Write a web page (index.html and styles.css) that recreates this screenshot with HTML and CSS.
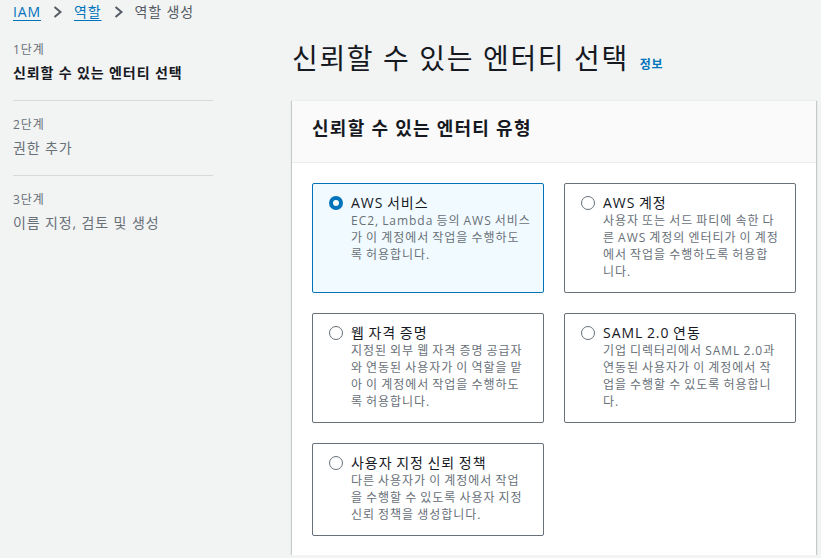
FILE: index.html
```html
<!DOCTYPE html>
<html lang="ko">

<head>
    <meta charset="UTF-8" />
    <meta name="viewport" content="width=device-width, initial-scale=1.0" />
    <link rel="stylesheet" href="styles.css">
    <title>역할 생성 - IAM</title>
</head>

<body>
    <nav class="breadcrumb">
        <a href="#" class="crumb-link">IAM</a>
        <svg class="chevron" width="9" height="12" viewBox="0 0 9 12"><polyline points="1.5,1 7.5,6 1.5,11" /></svg>
        <a href="#" class="crumb-link">역할</a>
        <svg class="chevron" width="9" height="12" viewBox="0 0 9 12"><polyline points="1.5,1 7.5,6 1.5,11" /></svg>
        <span class="crumb-current">역할 생성</span>
    </nav>
    <div class="layout">
        <ul class="steps">
            <li class="step">
                <div class="step-label">1단계</div>
                <div class="step-title active">신뢰할 수 있는 엔터티 선택</div>
            </li>
            <li class="step">
                <div class="step-label">2단계</div>
                <div class="step-title">권한 추가</div>
            </li>
            <li class="step">
                <div class="step-label">3단계</div>
                <div class="step-title">이름 지정, 검토 및 생성</div>
            </li>
        </ul>
        <main class="content">
            <h1 class="page-title">신뢰할 수 있는 엔터티 선택 <a href="#" class="info-link">정보</a></h1>
            <section class="panel">
                <div class="panel-header">
                    <h2>신뢰할 수 있는 엔터티 유형</h2>
                </div>
                <div class="panel-body">
                    <div class="tile selected">
                        <span class="radio checked"></span>
                        <div class="tile-text">
                            <div class="tile-title">AWS 서비스</div>
                            <div class="tile-desc">EC2, Lambda 등의 AWS 서비스<br>가 이 계정에서 작업을 수행하도<br>록 허용합니다.</div>
                        </div>
                    </div>
                    <div class="tile">
                        <span class="radio"></span>
                        <div class="tile-text">
                            <div class="tile-title">AWS 계정</div>
                            <div class="tile-desc">사용자 또는 서드 파티에 속한 다<br>른 AWS 계정의 엔터티가 이 계정<br>에서 작업을 수행하도록 허용합<br>니다.</div>
                        </div>
                    </div>
                    <div class="tile">
                        <span class="radio"></span>
                        <div class="tile-text">
                            <div class="tile-title">웹 자격 증명</div>
                            <div class="tile-desc">지정된 외부 웹 자격 증명 공급자<br>와 연동된 사용자가 이 역할을 맡<br>아 이 계정에서 작업을 수행하도<br>록 허용합니다.</div>
                        </div>
                    </div>
                    <div class="tile">
                        <span class="radio"></span>
                        <div class="tile-text">
                            <div class="tile-title">SAML 2.0 연동</div>
                            <div class="tile-desc">기업 디렉터리에서 SAML 2.0과<br>연동된 사용자가 이 계정에서 작<br>업을 수행할 수 있도록 허용합니<br>다.</div>
                        </div>
                    </div>
                    <div class="tile">
                        <span class="radio"></span>
                        <div class="tile-text">
                            <div class="tile-title">사용자 지정 신뢰 정책</div>
                            <div class="tile-desc">다른 사용자가 이 계정에서 작업<br>을 수행할 수 있도록 사용자 지정<br>신뢰 정책을 생성합니다.</div>
                        </div>
                    </div>
                </div>
            </section>
        </main>
    </div>
</body>

</html>
```

FILE: styles.css
```css
* {
    margin: 0;
    padding: 0;
    box-sizing: border-box;
}

body {
    background-color: #f2f3f3;
    font-family: "Open Sans", "Noto Sans CJK KR", sans-serif;
    color: #16191f;
    padding-left: 13px;
    overflow: hidden;
    letter-spacing: 0.055em;
}

.breadcrumb {
    display: flex;
    align-items: center;
    gap: 12px;
    font-size: 14px;
    line-height: 20px;
    padding-top: 2px;
}

.crumb-link {
    color: #0073bb;
    text-decoration: underline;
    text-underline-offset: 3px;
}

.crumb-current {
    color: #545b64;
}

.chevron polyline {
    fill: none;
    stroke: #545b64;
    stroke-width: 2;
}

.layout {
    display: flex;
}

.steps {
    list-style: none;
    width: 200px;
    margin-right: 79px;
    padding-top: 19px;
}

.step {
    padding: 15px 0 16px;
    border-top: 1px solid #d5dbdb;
}

.step:first-child {
    border-top: none;
    padding-top: 0;
}

.step-label {
    font-size: 12px;
    line-height: 17px;
    color: #687078;
}

.step-title {
    margin-top: 4px;
    font-size: 14px;
    line-height: 22px;
    color: #687078;
}

.step-title.active {
    color: #16191f;
    font-weight: 700;
}

.page-title {
    margin-top: 18px;
    font-size: 28px;
    line-height: 36px;
    font-weight: 400;
    letter-spacing: 0.058em;
    color: #16191f;
}

.info-link {
    margin-left: 2px;
    font-size: 12px;
    line-height: 1;
    font-weight: 700;
    letter-spacing: 0.06em;
    color: #0073bb;
    text-decoration: none;
}

.panel {
    width: 524px;
    margin-top: 24px;
    background-color: #fff;
    box-shadow: 0 1px 1px 0 rgba(0, 28, 36, .3), 1px 1px 1px 0 rgba(0, 28, 36, .15), -1px 1px 1px 0 rgba(0, 28, 36, .15);
    border-top: 1px solid #eaeded;
}

.panel-header {
    background-color: #fafafa;
    border-bottom: 1px solid #eaeded;
    padding: 14px 20px 21px;
}

.panel-header h2 {
    font-size: 18px;
    line-height: 26px;
    font-weight: 700;
    letter-spacing: 0.07em;
}

.panel-body {
    display: grid;
    grid-template-columns: 232px 232px;
    gap: 20px;
    padding: 20px 20px 19px;
}

.tile {
    display: flex;
    gap: 8px;
    padding: 10px 6px 12px 16px;
    border: 1px solid #687078;
    border-radius: 2px;
    background-color: #fff;
}

.tile.selected {
    border-color: #0073bb;
    background-color: #f1faff;
}

.radio {
    flex: none;
    width: 14px;
    height: 14px;
    margin-top: 2px;
    border: 1.5px solid #687078;
    border-radius: 50%;
    background-color: #fff;
}

.radio.checked {
    border: 4px solid #0073bb;
}

.tile-text {
    flex: 1;
    min-width: 0;
    letter-spacing: 0.06em;
    word-spacing: -0.06em;
}

.tile-title {
    font-size: 14px;
    line-height: 18px;
    color: #16191f;
}

.tile-desc {
    font-size: 12px;
    line-height: 17px;
    color: #687078;
    white-space: nowrap;
}
```
